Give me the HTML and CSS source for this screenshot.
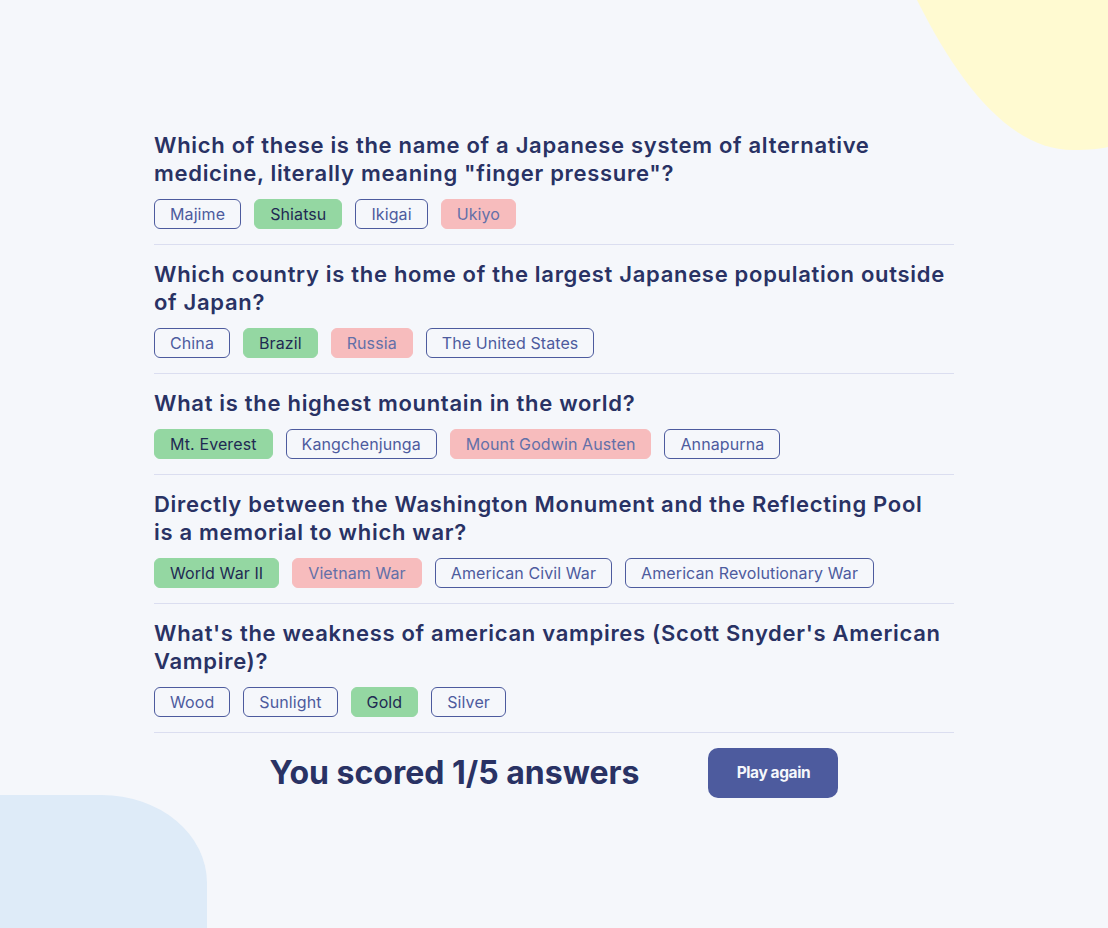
FILE: index.html
```html
<!DOCTYPE html>
<html lang="en">
<head>
<meta charset="utf-8">
<title>Quizzical</title>
<link rel="stylesheet" href="styles.css">
</head>
<body>
<svg class="blob-yellow" width="200" height="160" viewBox="908 0 200 160" aria-hidden="true">
  <path d="M917 0 C 962 90, 1013 150, 1073 150 C 1090 150, 1100 149, 1108 147 L1108 0 Z" fill="#FFFAD1"/>
</svg>
<div class="blob-blue"></div>
<main class="quiz">
  <section class="question">
    <h2 class="q-text">Which of these is the name of a Japanese system of alternative medicine, literally meaning "finger pressure"?</h2>
    <div class="answers">
      <span class="answer">Majime</span>
      <span class="answer correct">Shiatsu</span>
      <span class="answer">Ikigai</span>
      <span class="answer wrong">Ukiyo</span>
    </div>
  </section>
  <section class="question">
    <h2 class="q-text">Which country is the home of the largest Japanese population outside of Japan?</h2>
    <div class="answers">
      <span class="answer">China</span>
      <span class="answer correct">Brazil</span>
      <span class="answer wrong">Russia</span>
      <span class="answer">The United States</span>
    </div>
  </section>
  <section class="question">
    <h2 class="q-text">What is the highest mountain in the world?</h2>
    <div class="answers">
      <span class="answer correct">Mt. Everest</span>
      <span class="answer">Kangchenjunga</span>
      <span class="answer wrong">Mount Godwin Austen</span>
      <span class="answer">Annapurna</span>
    </div>
  </section>
  <section class="question">
    <h2 class="q-text">Directly between the Washington Monument and the Reflecting Pool is&nbsp;a memorial to which war?</h2>
    <div class="answers">
      <span class="answer correct">World War II</span>
      <span class="answer wrong">Vietnam War</span>
      <span class="answer">American Civil War</span>
      <span class="answer">American Revolutionary War</span>
    </div>
  </section>
  <section class="question">
    <h2 class="q-text">What's the weakness of american vampires (Scott Snyder's American Vampire)?</h2>
    <div class="answers">
      <span class="answer">Wood</span>
      <span class="answer">Sunlight</span>
      <span class="answer correct">Gold</span>
      <span class="answer">Silver</span>
    </div>
  </section>
  <div class="score-row">
    <p class="score">You scored 1/5 answers</p>
    <button class="play-btn">Play again</button>
  </div>
</main>
</body>
</html>
```
FILE: styles.css
```css
* { box-sizing: border-box; }
html, body { margin: 0; padding: 0; }
body {
  background: #F5F7FB;
  min-height: 100vh;
  display: flex;
  align-items: center;
  justify-content: center;
  font-family: "Inter", "Liberation Sans", sans-serif;
  color: #293264;
  position: relative;
  overflow: hidden;
}
.blob-yellow {
  position: absolute;
  top: 0;
  right: 0;
}
.blob-blue {
  position: absolute;
  left: 0;
  bottom: 0;
  width: 207px;
  height: 133px;
  background: #DEEBF8;
  border-top-right-radius: 105px 88px;
}
.quiz {
  width: 800px;
  position: relative;
  z-index: 1;
}
.question {
  padding-bottom: 15px;
  border-bottom: 1px solid #DBDEF0;
  margin-bottom: 15px;
}
.q-text {
  margin: 0;
  font-family: "Inter", sans-serif;
  font-weight: 600;
  font-size: 22px;
  line-height: 28px;
  letter-spacing: 0.7px;
  color: #293264;
}
.answers {
  display: flex;
  gap: 13px;
  margin-top: 12px;
}
.answer {
  display: inline-flex;
  align-items: center;
  height: 30px;
  padding: 0 15px;
  border: 1px solid #4D5B9E;
  border-radius: 6px;
  font-size: 16px;
  letter-spacing: 0.1px;
  color: #4D5B9E;
}
.answer.correct {
  background: #94D7A2;
  border-color: #94D7A2;
  color: #1F2A52;
}
.answer.wrong {
  background: #F7BCBD;
  border-color: #F7BCBD;
  color: #6370A8;
}
.score-row {
  display: flex;
  align-items: center;
  justify-content: center;
  gap: 69px;
}
.score {
  margin: 0;
  font-size: 32px;
  font-weight: 700;
  color: #293264;
}
.play-btn {
  width: 130px;
  height: 50px;
  border: none;
  border-radius: 10px;
  background: #4D5B9E;
  color: #F5F7FB;
  font-family: "Inter", sans-serif;
  font-weight: 700;
  font-size: 15.5px;
  letter-spacing: -0.4px;
}
```
